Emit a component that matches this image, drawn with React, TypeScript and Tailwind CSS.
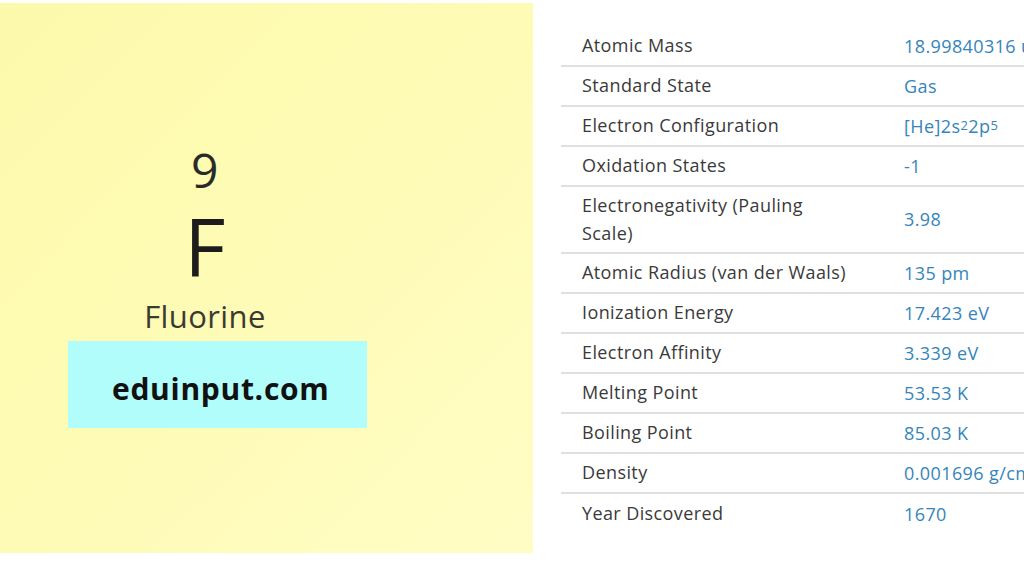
import React from 'react';

type Row = { label: string; value: React.ReactNode };

const rows: Row[] = [
  { label: 'Atomic Mass', value: '18.99840316 u' },
  { label: 'Standard State', value: 'Gas' },
  {
    label: 'Electron Configuration',
    value: (
      <>
        [He]2s<sup className="text-[13px] relative -top-[3px]">2</sup>2p
        <sup className="text-[13px] relative -top-[3px]">5</sup>
      </>
    ),
  },
  { label: 'Oxidation States', value: '-1' },
  { label: 'Electronegativity (Pauling Scale)', value: '3.98' },
  { label: 'Atomic Radius (van der Waals)', value: '135 pm' },
  { label: 'Ionization Energy', value: '17.423 eV' },
  { label: 'Electron Affinity', value: '3.339 eV' },
  { label: 'Melting Point', value: '53.53 K' },
  { label: 'Boiling Point', value: '85.03 K' },
  { label: 'Density', value: '0.001696 g/cm³' },
  { label: 'Year Discovered', value: '1670' },
];

const ElementCard = () => (
  <div className="mt-[3px] w-[533px] h-[550px] shrink-0 bg-gradient-to-br from-[#fdf9ab] via-[#fefbb6] to-[#fffdc4] pl-[68px] pt-[143px]">
    <div className="w-[274px] flex flex-col items-center">
      <div className="text-[48px] leading-[48px] text-[#2a2a2a]">9</div>
      <div className="mt-[12px] text-[80px] leading-[80px] text-[#1c1c1c]">F</div>
      <div className="mt-[15px] text-[31px] leading-[31px] text-[#3a3a30]">Fluorine</div>
    </div>
    <div className="mt-[9px] w-[299px] h-[87px] bg-[#b1fdfb] flex items-center pl-[44px] pt-[8px]">
      <span className="text-[30px] leading-[36px] font-bold text-[#111] tracking-[0.7px]">eduinput.com</span>
    </div>
  </div>
);

const PropertyTable = () => (
  <div className="flex-1 pl-[28px] pt-[27px] overflow-hidden">
    {rows.map((row, i) => (
      <div
        key={row.label}
        className={
          'flex items-center min-h-[40px] ' +
          (i < rows.length - 1 ? 'border-b-2 border-[#e0e0e0]' : '')
        }
      >
        <div className="w-[322px] shrink-0 pl-[21px] pr-[31px] py-[5px] text-[#3a3a3a] leading-[27.5px]">
          {row.label}
        </div>
        <div className="pl-[21px] whitespace-nowrap text-[#3585bb]">{row.value}</div>
      </div>
    ))}
  </div>
);

export default function App() {
  return (
    <div
      className="w-[1024px] h-[576px] bg-white flex overflow-hidden text-[18px] tracking-[0.4px]"
      style={{ fontFamily: '"Open Sans", "Noto Sans", sans-serif' }}
    >
      <ElementCard />
      <PropertyTable />
    </div>
  );
}
